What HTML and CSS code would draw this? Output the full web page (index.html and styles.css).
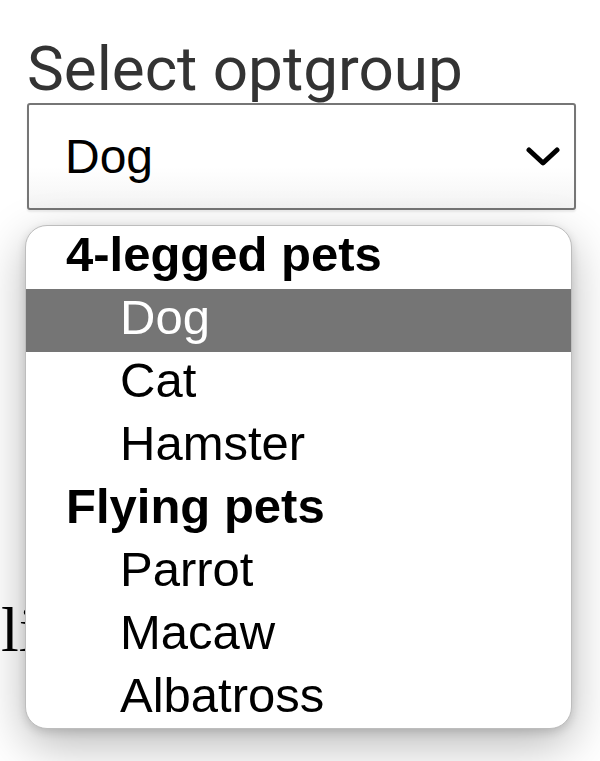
FILE: index.html
```html
<!DOCTYPE html>
<html lang="en">
<head>
<meta charset="utf-8">
<title>Select optgroup</title>
<link rel="stylesheet" href="styles.css">
</head>
<body>
<main class="page">
  <label class="label" for="pet">Select optgroup</label>
  <div class="select" id="pet">
    <span class="value">Dog</span>
    <svg class="chevron" width="34" height="22" viewBox="0 0 34 22" aria-hidden="true">
      <path d="M3 4 L17 17 L31 4" fill="none" stroke="#000" stroke-width="5" stroke-linecap="round" stroke-linejoin="round"/>
    </svg>
  </div>
  <p class="behind">li</p>
  <ul class="popup" role="listbox">
    <li class="group">4-legged pets</li>
    <li class="option selected">Dog</li>
    <li class="option">Cat</li>
    <li class="option">Hamster</li>
    <li class="group">Flying pets</li>
    <li class="option">Parrot</li>
    <li class="option">Macaw</li>
    <li class="option">Albatross</li>
  </ul>
</main>
</body>
</html>
```
FILE: styles.css
```css
html, body {
  margin: 0;
  padding: 0;
  background: #fff;
}
.page {
  position: relative;
  width: 600px;
  height: 761px;
  overflow: hidden;
  padding: 34px 0 0 27px;
  box-sizing: border-box;
}
.label {
  display: block;
  font-family: Roboto, "Liberation Sans", sans-serif;
  font-size: 62px;
  line-height: 69px;
  color: #333;
  margin: 0;
}
.select {
  box-sizing: border-box;
  width: 549px;
  height: 107px;
  border: 2px solid #767676;
  border-radius: 3px;
  background: linear-gradient(#fff 60%, #f4f4f4);
  display: flex;
  align-items: center;
  justify-content: space-between;
  padding: 0 14px 0 36px;
  font-family: "Liberation Sans", Arial, sans-serif;
  font-size: 48px;
  color: #000;
  box-shadow: 0 2px 2px rgba(0,0,0,0.08);
}
.value {
  line-height: 1;
}
.chevron {
  display: block;
}
.behind {
  margin: 388px 0 0 -26px;
  font-family: "Liberation Serif", "Times New Roman", serif;
  font-size: 64px;
  line-height: 1;
  color: #000;
}
.popup {
  position: absolute;
  left: 25px;
  top: 225px;
  width: 547px;
  height: 504px;
  box-sizing: border-box;
  margin: 0;
  padding: 0;
  list-style: none;
  background: #fff;
  border: 1px solid #bdbdbd;
  border-radius: 22px;
  overflow: hidden;
  box-shadow: 0 16px 48px rgba(0,0,0,0.28), 0 3px 10px rgba(0,0,0,0.14);
  font-family: "Liberation Sans", Arial, sans-serif;
  font-size: 49px;
  color: #000;
}
.popup li {
  height: 63px;
  line-height: 56px;
  white-space: nowrap;
}
.group {
  font-weight: bold;
  padding-left: 40px;
}
.option {
  padding-left: 94px;
}
.option.selected {
  background: #757575;
  color: #fff;
}
```
